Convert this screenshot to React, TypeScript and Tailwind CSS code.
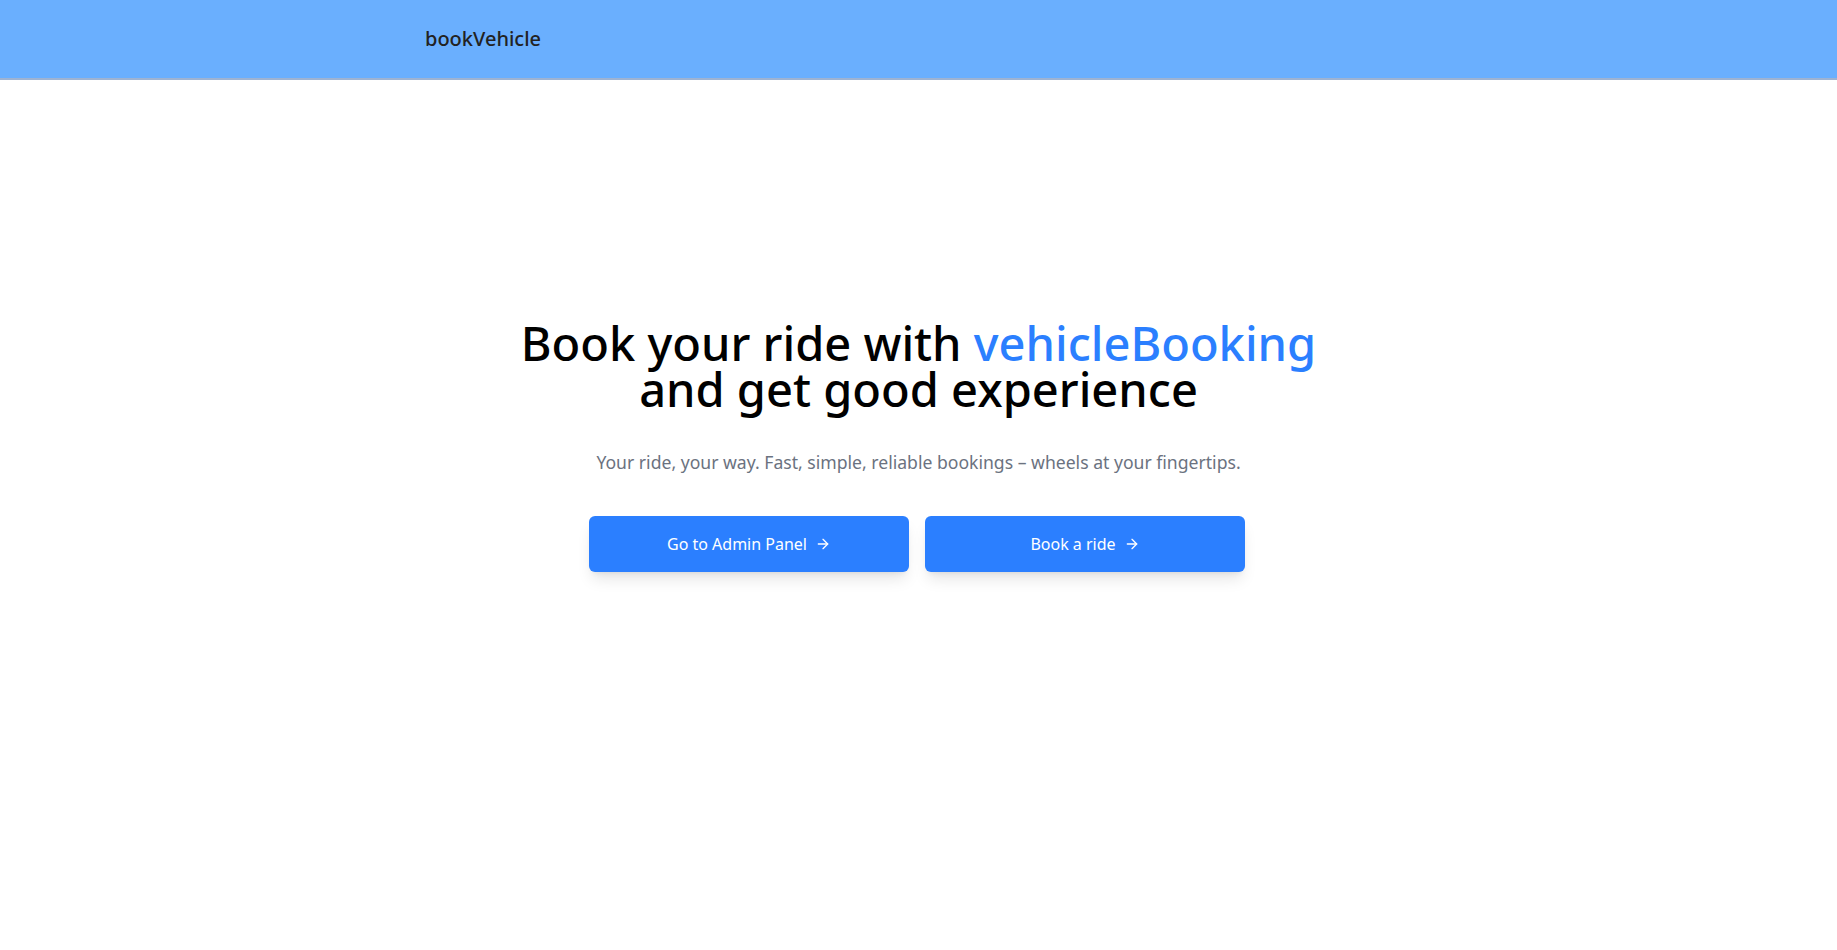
import React from "react";
import { ArrowRight } from "lucide-react";

export default function App() {
  return (
    <div className="min-h-screen bg-white" style={{ fontFamily: '"Noto Sans", "Open Sans", sans-serif' }}>
      <header className="h-20 bg-[#6aaffe] border-b-2 border-[#9eb3d2]">
        <div className="h-full flex items-center pl-[425px]">
          <span className="text-xl font-medium text-[#222]">bookVehicle</span>
        </div>
      </header>
      <main className="flex flex-col items-center pt-[240px]">
        <h1 className="text-center text-[47px] leading-[46px] font-medium text-black">
          Book your ride with <span className="text-[#2b7fff]">vehicleBooking</span>
          <br />
          and get good experience
        </h1>
        <p className="mt-[36px] text-[17.6px] leading-7 text-[#6b7280]">
          Your ride, your way. Fast, simple, reliable bookings – wheels at your fingertips.
        </p>
        <div className="mt-[40px] flex gap-4 pr-[3px]">
          <button className="w-[320px] h-14 rounded-md bg-[#2b7fff] text-white text-base flex items-center justify-center gap-2 shadow-lg">
            Go to Admin Panel
            <ArrowRight size={16} strokeWidth={2} />
          </button>
          <button className="w-[320px] h-14 rounded-md bg-[#2b7fff] text-white text-base flex items-center justify-center gap-2 shadow-lg">
            Book a ride
            <ArrowRight size={16} strokeWidth={2} />
          </button>
        </div>
      </main>
    </div>
  );
}
